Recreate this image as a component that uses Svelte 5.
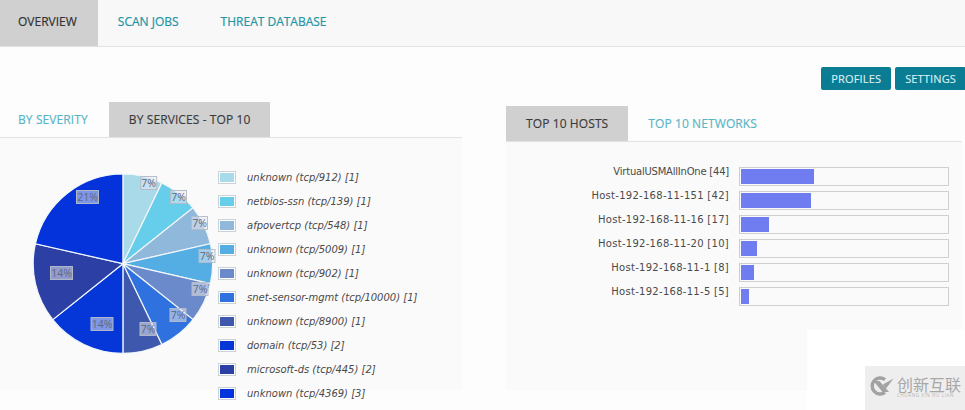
<script lang="ts">
  const cx = 122.9;
  const cy = 263.7;
  const r = 89.7;

  const services = [
    { name: 'unknown (tcp/912)', count: 1, color: '#a9dae9', lx: 148.7, ly: 183 },
    { name: 'netbios-ssn (tcp/139)', count: 1, color: '#66cdea', lx: 178.5, ly: 197 },
    { name: 'afpovertcp (tcp/548)', count: 1, color: '#8fb8da', lx: 199.5, ly: 223 },
    { name: 'unknown (tcp/5009)', count: 1, color: '#54aee4', lx: 207, ly: 256 },
    { name: 'unknown (tcp/902)', count: 1, color: '#6a8acb', lx: 200, ly: 289 },
    { name: 'snet-sensor-mgmt (tcp/10000)', count: 1, color: '#2f72df', lx: 178, ly: 315 },
    { name: 'unknown (tcp/8900)', count: 1, color: '#3e58ad', lx: 148, ly: 329 },
    { name: 'domain (tcp/53)', count: 2, color: '#0536d8', lx: 102, ly: 324 },
    { name: 'microsoft-ds (tcp/445)', count: 2, color: '#2b3fa5', lx: 61.5, ly: 273 },
    { name: 'unknown (tcp/4369)', count: 3, color: '#0433dc', lx: 87.5, ly: 197 }
  ];

  const hosts = [
    { name: 'VirtualUSMAllInOne', count: 44, width: 73 },
    { name: 'Host-192-168-11-151', count: 42, width: 70 },
    { name: 'Host-192-168-11-16', count: 17, width: 28 },
    { name: 'Host-192-168-11-20', count: 10, width: 16 },
    { name: 'Host-192-168-11-1', count: 8, width: 13 },
    { name: 'Host-192-168-11-5', count: 5, width: 8 }
  ];

  const total = services.reduce((sum, s) => sum + s.count, 0);

  function point(angle: number) {
    return `${(cx + r * Math.sin(angle)).toFixed(2)} ${(cy - r * Math.cos(angle)).toFixed(2)}`;
  }

  // build wedges clockwise from twelve o'clock
  let acc = 0;
  const slices = services.map((s) => {
    const start = (acc / total) * Math.PI * 2;
    acc += s.count;
    const end = (acc / total) * Math.PI * 2;
    const large = end - start > Math.PI ? 1 : 0;
    return {
      ...s,
      percent: Math.round((s.count / total) * 100) + '%',
      d: `M${cx} ${cy} L${point(start)} A${r} ${r} 0 ${large} 1 ${point(end)} Z`
    };
  });
</script>

<div class="page">
  <nav class="main-nav">
    <a class="main-tab active" href="#overview">OVERVIEW</a>
    <a class="main-tab" href="#jobs">SCAN JOBS</a>
    <a class="main-tab" href="#threats">THREAT DATABASE</a>
  </nav>

  <div class="toolbar">
    <button class="btn">PROFILES</button>
    <button class="btn">SETTINGS</button>
  </div>

  <div class="columns">
    <section class="left">
      <div class="sub-nav">
        <a class="sub-tab first" href="#severity">BY SEVERITY</a>
        <a class="sub-tab active" href="#services">BY SERVICES - TOP 10</a>
      </div>
      <div class="panel pie-panel">
        <svg class="pie" width="218" height="252" viewBox="0 138 218 252">
          {#each slices as s}
            <path d={s.d} fill={s.color} stroke="#f1f6fa" stroke-width="1.2" />
          {/each}
          {#each slices as s}
            <rect
              x={s.lx - (s.percent.length > 2 ? 11 : 8)}
              y={s.ly - 6.5}
              width={s.percent.length > 2 ? 22 : 16}
              height="13"
              class="pct-box"
            />
            <text x={s.lx} y={s.ly + 4} text-anchor="middle" class="pct">{s.percent}</text>
          {/each}
        </svg>
        <ul class="legend">
          {#each services as s}
            <li>
              <span class="swatch"><span style="background: {s.color}"></span></span>
              <span class="legend-text">{s.name} [{s.count}]</span>
            </li>
          {/each}
        </ul>
      </div>
    </section>

    <section class="right">
      <div class="sub-nav">
        <a class="sub-tab active wide" href="#hosts">TOP 10 HOSTS</a>
        <a class="sub-tab" href="#networks">TOP 10 NETWORKS</a>
      </div>
      <div class="panel host-panel">
        {#each hosts as h}
          <div class="host-row">
            <span class="host-name" class:numeric={h.name.startsWith('Host')}>{h.name} [{h.count}]</span>
            <span class="track"><span class="fill" style="width: {h.width}px"></span></span>
          </div>
        {/each}
      </div>
    </section>
  </div>

  <div class="patch"></div>
  <div class="watermark">
    <svg class="mark-logo" width="25" height="20" viewBox="0 0 25 20">
      <path d="M16 3.6 A8 8 0 1 0 16 16.4" fill="none" stroke="#a2a2a2" stroke-width="3.4" />
      <path d="M4.5 5 L10.5 5 L20 16 L13.5 16 Z M14 8.5 L24.5 2.5 L17 12.5 Z" fill="#a2a2a2" />
    </svg>
    <div class="mark-text">
      <span class="mark-cn">创新互联</span>
      <span class="mark-en">CHUANG XIN HU LIAN</span>
    </div>
  </div>
</div>

<style>
  :global(body) {
    margin: 0;
    background: #fdfdfd;
  }

  .page {
    position: relative;
    width: 965px;
    height: 410px;
    overflow: hidden;
    font-family: 'Open Sans', sans-serif;
    background: #fdfdfd;
  }

  a {
    text-decoration: none;
  }

  .main-nav {
    display: flex;
    height: 47px;
    background: #f8f8f8;
    border-bottom: 1px solid #e2e2e2;
    box-sizing: border-box;
  }

  .main-tab {
    display: flex;
    align-items: center;
    padding: 0 18px 3px;
    margin-right: 5px;
    font-size: 12px;
    font-weight: 500;
    color: #2195a6;
    -webkit-text-stroke: 0.2px currentColor;
  }

  .main-tab.active {
    margin-right: 0;
    padding-right: 21px;
    background: #d0d0d0;
    color: #333;
  }

  .main-tab:nth-child(2) {
    padding: 0 19px 3px 20px;
  }

  .toolbar {
    display: flex;
    justify-content: flex-end;
    gap: 4px;
    height: 23px;
    margin-top: 20px;
    margin-right: -1px;
  }

  .btn {
    height: 23px;
    padding: 0 10px;
    border: none;
    border-radius: 2px;
    background: #0a7d94;
    color: #dceef2;
    font-family: inherit;
    font-size: 11px;
    font-weight: 500;
    letter-spacing: 0.15px;
    -webkit-text-stroke: 0.15px currentColor;
  }

  .columns {
    display: grid;
    grid-template-columns: 462px 456px;
    column-gap: 44px;
    margin-top: 12px;
  }

  .sub-nav {
    display: flex;
    height: 36px;
    border-bottom: 1px solid #e2e2e2;
    box-sizing: border-box;
  }

  .right {
    margin-top: 4px;
  }

  .sub-tab {
    display: flex;
    align-items: center;
    padding: 0 20px;
    font-size: 12px;
    font-weight: 500;
    letter-spacing: 0.1px;
    color: #55b5c6;
    -webkit-text-stroke: 0.15px currentColor;
  }

  .sub-tab.first {
    padding: 0 21px 0 18px;
  }

  .sub-tab.active {
    background: #d0d0d0;
    color: #3a3a3a;
  }

  .panel {
    background: #fafafa;
  }

  .pie-panel {
    display: flex;
    height: 252px;
  }

  .pct-box {
    fill: rgba(228, 232, 242, 0.55);
    stroke: rgba(180, 188, 198, 0.95);
    stroke-width: 1;
  }

  .pct {
    font-family: 'Open Sans', sans-serif;
    font-size: 10.5px;
    fill: #5f677c;
  }

  .legend {
    list-style: none;
    margin: 27px 0 0;
    padding: 0;
  }

  .legend li {
    display: flex;
    align-items: center;
    height: 24px;
  }

  .swatch {
    display: block;
    width: 18px;
    height: 13px;
    padding: 1px;
    margin-right: 11px;
    border: 1px solid #ccd3d8;
    box-sizing: border-box;
    background: #fff;
  }

  .swatch span {
    display: block;
    height: 100%;
  }

  .legend-text {
    font-family: 'DejaVu Sans', sans-serif;
    font-size: 10px;
    font-style: italic;
    color: #4a4a4a;
    white-space: nowrap;
  }

  .host-panel {
    display: flex;
    flex-direction: column;
    height: 249px;
    padding-top: 22px;
    box-sizing: border-box;
  }

  .host-row {
    display: flex;
    align-items: flex-start;
    height: 24px;
  }

  .host-name {
    width: 223px;
    margin-right: 10px;
    margin-top: 1px;
    text-align: right;
    font-family: 'DejaVu Sans', sans-serif;
    font-size: 10px;
    line-height: 14px;
    letter-spacing: -0.22px;
    color: #4a4a4a;
    white-space: nowrap;
  }

  /* digits and hyphens ran wider in the original font */
  .host-name.numeric {
    letter-spacing: 0.28px;
  }

  .track {
    display: block;
    width: 210px;
    height: 19px;
    padding: 1px;
    margin-top: 3px;
    border: 1px solid #cfcfcf;
    box-sizing: border-box;
  }

  .fill {
    display: block;
    height: 100%;
    background: #6f7df0;
  }

  /* pasted-over corner of the screenshot */
  .patch {
    position: absolute;
    left: 807px;
    top: 330px;
    width: 158px;
    height: 80px;
    background: #fff;
  }

  .watermark {
    position: absolute;
    left: 865px;
    top: 366px;
    width: 100px;
    height: 44px;
    display: flex;
    align-items: center;
    gap: 3px;
    padding: 0 0 0 4px;
    box-sizing: border-box;
    background: #eeeeee;
  }

  .mark-logo {
    margin-top: -4px;
  }

  .mark-text {
    display: flex;
    flex-direction: column;
    width: 65px;
    margin-top: -2px;
  }

  .mark-cn {
    font-family: 'Noto Sans CJK SC', sans-serif;
    font-size: 16px;
    line-height: 17px;
    color: #a8a8a8;
  }

  .mark-en {
    font-size: 4.5px;
    line-height: 5px;
    letter-spacing: 0.6px;
    color: #b5b5b5;
    white-space: nowrap;
  }
</style>
